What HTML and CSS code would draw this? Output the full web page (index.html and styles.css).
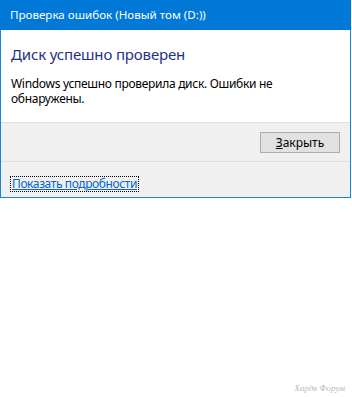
FILE: index.html
```html
<!DOCTYPE html>
<html lang="ru">
<head>
    <meta charset="UTF-8">
    <title>Проверка ошибок</title>
    <link rel="stylesheet" href="styles.css">
</head>
<body>
    <div class="dialog">
        <div class="titlebar">Проверка ошибок (Новый том (D:))</div>
        <div class="content">
            <h1 class="instruction">Диск успешно проверен</h1>
            <p class="message">Windows успешно проверила диск. Ошибки не обнаружены.</p>
        </div>
        <div class="buttons">
            <button class="btn" type="button"><u>З</u>акрыть</button>
        </div>
        <div class="footer">
            <a class="details" href="#">Показать подробности</a>
        </div>
    </div>
    <div class="watermark">Хардв Форум</div>
</body>
</html>
```

FILE: styles.css
```css
body {
    margin: 0;
    background: #fff;
    font-family: "Noto Sans", "Open Sans", sans-serif;
    font-size: 12px;
    color: #000;
    width: 352px;
    height: 397px;
    position: relative;
    overflow: hidden;
}

.dialog {
    width: 349px;
    border: 1px solid #1883d7;
    border-top: none;
    background: #f0f0f0;
}

.titlebar {
    height: 30px;
    line-height: 29px;
    margin: 0 -1px;
    padding-left: 10px;
    background: #0078d7;
    color: #fff;
    font-size: 11.6px;
    letter-spacing: 0;
}

.content {
    background: #fff;
    height: 93px;
    padding: 14px 10px 0;
    box-sizing: border-box;
    border-bottom: 1px solid #dfdfdf;
}

.instruction {
    margin: 0 0 12px;
    font-size: 15px;
    font-weight: normal;
    color: #1e3287;
    line-height: 20px;
    letter-spacing: -0.15px;
}

.message {
    margin: 0;
    width: 280px;
    line-height: 15px;
    letter-spacing: -0.3px;
}

.buttons {
    height: 39px;
    display: flex;
    justify-content: flex-end;
    align-items: flex-start;
    padding: 9px 10px 0 0;
    box-sizing: border-box;
    border-bottom: 1px solid #dfdfdf;
}

.btn {
    width: 80px;
    height: 21px;
    padding: 0;
    border: 1px solid #adadad;
    background: #e1e1e1;
    font-family: inherit;
    font-size: 12px;
    color: #000;
}

.btn u {
    text-decoration-thickness: 1px;
}

.footer {
    height: 35px;
    padding: 13px 0 0 10px;
    box-sizing: border-box;
}

.details {
    display: inline-block;
    color: #0066cc;
    outline: 1px dotted #000;
    line-height: 14px;
    padding: 0 1px;
    letter-spacing: -0.4px;
}

.watermark {
    position: absolute;
    right: 7px;
    bottom: 4px;
    font-family: "Liberation Serif", serif;
    font-style: italic;
    font-size: 9px;
    color: #b8b8b8;
}
```
